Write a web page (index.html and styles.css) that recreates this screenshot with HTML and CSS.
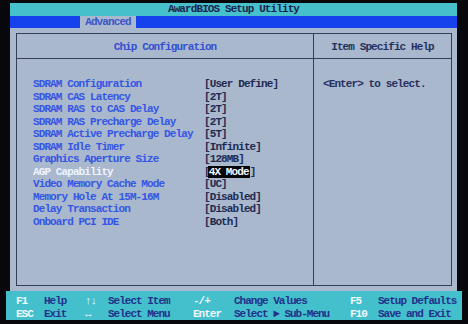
FILE: index.html
```html
<!DOCTYPE html>
<html lang="en">
<head>
  <meta charset="UTF-8" />
  <title>AwardBIOS Setup Utility</title>
  <link rel="stylesheet" href="styles.css">
</head>
<body>
  <div class="screen">
    <div class="titlebar">AwardBIOS Setup Utility</div>
    <div class="tabbar">
      <span class="tab">Advanced</span>
    </div>

    <div class="main">
      <div class="frame">
        <div class="head head-left">Chip Configuration</div>
        <div class="head head-right">Item Specific Help</div>

        <div class="panel">
          <div class="row"><span class="label">SDRAM Configuration</span><span class="value">[User Define]</span></div>
          <div class="row"><span class="label">SDRAM CAS Latency</span><span class="value">[2T]</span></div>
          <div class="row"><span class="label">SDRAM RAS to CAS Delay</span><span class="value">[2T]</span></div>
          <div class="row"><span class="label">SDRAM RAS Precharge Delay</span><span class="value">[2T]</span></div>
          <div class="row"><span class="label">SDRAM Active Precharge Delay</span><span class="value">[5T]</span></div>
          <div class="row"><span class="label">SDRAM Idle Timer</span><span class="value">[Infinite]</span></div>
          <div class="row"><span class="label">Graphics Aperture Size</span><span class="value">[128MB]</span></div>
          <div class="row selected"><span class="label">AGP Capability</span><span class="value">[<span class="hl">4X Mode</span>]</span></div>
          <div class="row"><span class="label">Video Memory Cache Mode</span><span class="value">[UC]</span></div>
          <div class="row"><span class="label">Memory Hole At 15M-16M</span><span class="value">[Disabled]</span></div>
          <div class="row"><span class="label">Delay Transaction</span><span class="value">[Disabled]</span></div>
          <div class="row"><span class="label">Onboard PCI IDE</span><span class="value">[Both]</span></div>
        </div>

        <div class="help">&lt;Enter&gt; to select.</div>
      </div>
    </div>

    <div class="footer">
      <span class="key">F1</span><span class="desc">Help</span>
      <span class="key">↑↓</span><span class="desc">Select Item</span>
      <span class="key">-/+</span><span class="desc">Change Values</span>
      <span class="key">F5</span><span class="desc">Setup Defaults</span>

      <span class="key">ESC</span><span class="desc">Exit</span>
      <span class="key">↔</span><span class="desc">Select Menu</span>
      <span class="key">Enter</span><span class="desc">Select ► Sub-Menu</span>
      <span class="key">F10</span><span class="desc">Save and Exit</span>
    </div>
  </div>
</body>
</html>
```

FILE: styles.css
```css
body {
  margin: 0;
  background: #07070c;
  font-family: "Liberation Mono", "DejaVu Sans Mono", monospace;
  font-weight: bold;
  font-size: 11px;
  letter-spacing: -0.9px;
}
.screen {
  width: 447px;
  height: 317px;
  margin: 3px 0 0 10px;
  display: flex;
  flex-direction: column;
  background: #a9b8cd;
}
.titlebar {
  height: 13px;
  line-height: 13px;
  background: #46c0cb;
  color: #1c2450;
  text-align: center;
}
.tabbar {
  height: 12px;
  background: #1642ee;
  padding-left: 70px;
}
.tab {
  display: inline-block;
  width: 56px;
  height: 12px;
  line-height: 12px;
  text-align: center;
  background: #a9b8cd;
  color: #3a55c8;
}
.main {
  flex: 1;
  padding: 5px 5px 5px 6px;
}
.frame {
  height: 100%;
  box-sizing: border-box;
  border: 1px solid #353d5a;
  display: grid;
  grid-template-columns: 297px 1fr;
  grid-template-rows: 25px 1fr;
}
.head {
  border-bottom: 1px solid #353d5a;
  text-align: center;
  line-height: 26px;
}
.head-left {
  border-right: 1px solid #353d5a;
  color: #3450d0;
}
.head-right {
  color: #263060;
}
.panel {
  border-right: 1px solid #353d5a;
  padding: 19px 0 0 16px;
}
.row {
  display: flex;
  height: 12.5px;
  line-height: 12.5px;
}
.label {
  width: 171px;
  color: #3456e4;
}
.value {
  color: #1e2a52;
}
.selected .label {
  color: #eef4ff;
}
.hl {
  background: #05070a;
  color: #f2f6ff;
  padding: 0 1px;
  margin-left: -2px;
}
.help {
  padding: 19px 0 0 9px;
  line-height: 12.5px;
  color: #263060;
}
/* the photo widens a little toward the bottom edge */
.footer {
  height: 29px;
  margin: 0 -5px 0 -4px;
  background: #43c0cc;
  box-sizing: border-box;
  padding: 4px 0 0 10px;
  display: grid;
  grid-template-columns: 28px 41px 23px 85px 41px 116px 28px auto;
  grid-auto-rows: 12.5px;
  line-height: 12.5px;
  white-space: nowrap;
  letter-spacing: -1px;
}
.key {
  color: #f2f8ff;
}
.desc {
  color: #22318a;
}
```
